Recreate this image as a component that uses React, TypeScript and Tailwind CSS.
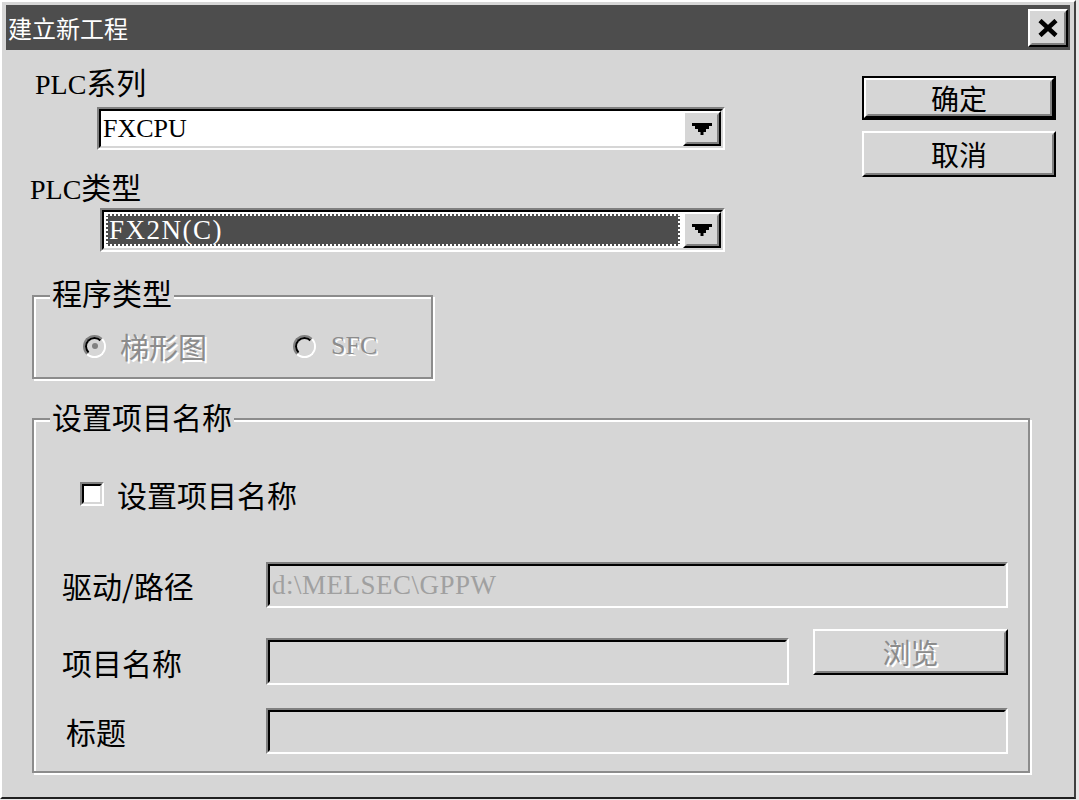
import React from "react";

function Arrow() {
  return (
    <svg width="20" height="12" viewBox="0 0 20 12">
      <path d="M0 0 H20 V3 H17 V6 H14 V9 H11.5 V12 H8.5 V9 H6 V6 H3 V3 H0 Z" fill="#000" />
    </svg>
  );
}

function ArrowButton() {
  return (
    <div className="w-[38px] h-full border-2 border-t-white border-l-white border-r-black border-b-black bg-[#d6d6d6]">
      <div className="w-full h-full border-2 border-t-[#d6d6d6] border-l-[#d6d6d6] border-r-[#808080] border-b-[#808080] flex items-center justify-center">
        <Arrow />
      </div>
    </div>
  );
}

function DisabledText({ children }: { children: React.ReactNode }) {
  return <span className="text-[#8c8c8c] [text-shadow:2px_2px_0_#ffffff]">{children}</span>;
}

export default function App() {
  return (
    <div className="w-[1079px] h-[800px] bg-[#e8e8e8] font-['Noto_Sans_CJK_SC',sans-serif] text-black">
      <div className="w-[1076px] h-[799px] bg-[#d6d6d6] border-2 border-t-white border-l-white border-r-[#404040] border-b-[#202020] flex flex-col">
        {/* Title bar */}
        <div className="mx-[4px] mt-[3px] h-[45px] bg-[#4d4d4d] flex items-center justify-between pl-[2px] pr-[2px]">
          <span className="text-white text-[24px] leading-none">建立新工程</span>
          <div className="w-[40px] h-[38px] bg-[#d6d6d6] border-2 border-t-white border-l-white border-r-black border-b-black">
            <div className="w-full h-full border-2 border-t-[#d6d6d6] border-l-[#d6d6d6] border-r-[#808080] border-b-[#808080] flex items-center justify-center">
              <svg width="22" height="18" viewBox="0 0 22 18">
                <path d="M3 1.5 L19 16.5 M19 1.5 L3 16.5" stroke="#000" strokeWidth="4.5" />
              </svg>
            </div>
          </div>
        </div>

        {/* Top section */}
        <div className="flex">
          <div className="w-[723px] flex flex-col">
            <div className="mt-[15px] ml-[33px] h-[32px] leading-[32px] text-[30px]">
              <span className="font-['Liberation_Serif',serif] text-[28px]">PLC</span>
              <span>系列</span>
            </div>
            {/* Combo 1 */}
            <div className="mt-[10px] ml-[95px] w-[628px] h-[43px] border-2 border-t-[#808080] border-l-[#808080] border-r-white border-b-white">
              <div className="w-full h-full border-2 border-t-black border-l-black border-r-[#d6d6d6] border-b-[#d6d6d6] bg-white flex items-center justify-between">
                <span className="pl-[2px] font-['Liberation_Serif',serif] text-[26px] leading-none">FXCPU</span>
                <ArrowButton />
              </div>
            </div>
            <div className="mt-[20px] ml-[28px] h-[32px] leading-[32px] text-[30px]">
              <span className="font-['Liberation_Serif',serif] text-[28px]">PLC</span>
              <span>类型</span>
            </div>
            {/* Combo 2 */}
            <div className="mt-[6px] ml-[98px] w-[625px] h-[44px] border-2 border-t-[#808080] border-l-[#808080] border-r-white border-b-white">
              <div className="w-full h-full border-2 border-t-black border-l-black border-r-[#d6d6d6] border-b-[#d6d6d6] bg-white flex items-stretch">
                <div className="flex-1 m-[2px] mr-[3px] bg-[#4d4d4d] border-2 border-dotted border-white flex items-center">
                  <span className="pl-[1px] font-['Liberation_Serif',serif] text-[27px] tracking-[1.5px] leading-none text-white">FX2N(C)</span>
                </div>
                <ArrowButton />
              </div>
            </div>
            {/* Group 1 */}
            <div className="relative mt-[43px] ml-[30px] w-[401px] h-[84px] border-2 border-[#8c8c8c] shadow-[inset_2px_2px_0_#ffffff,2px_2px_0_#ffffff]">
              <div className="absolute left-[16px] top-[-21px] px-[2px] bg-[#d6d6d6] text-[30px] leading-[32px]">程序类型</div>
              <div className="mt-[37px] ml-[49px] h-[24px] flex items-center">
                <div className="w-[23px] h-[23px] rounded-full border-2 border-t-[#808080] border-l-[#808080] border-r-white border-b-white">
                  <div className="w-full h-full rounded-full border-2 border-t-black border-l-black border-r-[#d6d6d6] border-b-[#d6d6d6] flex items-center justify-center">
                    <div className="w-[6px] h-[6px] rounded-full bg-[#808080]" />
                  </div>
                </div>
                <span className="ml-[14px] text-[29px] leading-none">
                  <DisabledText>梯形图</DisabledText>
                </span>
                <div className="ml-[86px] w-[23px] h-[23px] rounded-full border-2 border-t-[#808080] border-l-[#808080] border-r-white border-b-white">
                  <div className="w-full h-full rounded-full border-2 border-t-black border-l-black border-r-[#d6d6d6] border-b-[#d6d6d6]" />
                </div>
                <span className="ml-[15px] font-['Liberation_Serif',serif] text-[26px] leading-none">
                  <DisabledText>SFC</DisabledText>
                </span>
              </div>
            </div>
          </div>

          {/* Buttons */}
          <div className="ml-[137px] mt-[26px] flex flex-col gap-[11px]">
            <div className="w-[194px] h-[44px] border-2 border-black">
              <div className="w-full h-full border-2 border-t-white border-l-white border-r-black border-b-black">
                <div className="w-full h-full border-2 border-t-[#d6d6d6] border-l-[#d6d6d6] border-r-[#808080] border-b-[#808080] flex items-center justify-center text-[28px] leading-none">
                  确定
                </div>
              </div>
            </div>
            <div className="w-[194px] h-[46px] border-2 border-t-white border-l-white border-r-black border-b-black">
              <div className="w-full h-full border-2 border-t-[#d6d6d6] border-l-[#d6d6d6] border-r-[#808080] border-b-[#808080] flex items-center justify-center text-[28px] leading-none">
                取消
              </div>
            </div>
          </div>
        </div>

        {/* Group 2 */}
        <div className="relative mt-[39px] ml-[30px] w-[998px] h-[355px] border-2 border-[#8c8c8c] shadow-[inset_2px_2px_0_#ffffff,2px_2px_0_#ffffff] flex flex-col">
          <div className="absolute left-[16px] top-[-20px] px-[2px] bg-[#d6d6d6] text-[30px] leading-[32px]">设置项目名称</div>

          <div className="mt-[58px] ml-[46px] h-[32px] flex items-center">
            <div className="w-[24px] h-[24px] border-2 border-t-[#808080] border-l-[#808080] border-r-white border-b-white">
              <div className="w-full h-full border-2 border-t-black border-l-black border-r-[#d6d6d6] border-b-[#d6d6d6] bg-white" />
            </div>
            <span className="ml-[13px] text-[30px] leading-[32px]">设置项目名称</span>
          </div>

          {/* Row 1 */}
          <div className="mt-[52px] ml-[28px] h-[46px] flex items-center">
            <span className="w-[204px] text-[30px] leading-[32px]">驱动/路径</span>
            <div className="w-[742px] h-[46px] border-2 border-t-[#808080] border-l-[#808080] border-r-white border-b-white">
              <div className="w-full h-full border-2 border-t-black border-l-black border-r-[#d6d6d6] border-b-[#d6d6d6] flex items-center">
                <span className="pl-[2px] font-['Liberation_Serif',serif] text-[27px] tracking-[0.5px] leading-none text-[#a0a0a0]">d:\MELSEC\GPPW</span>
              </div>
            </div>
          </div>

          {/* Row 2 */}
          <div className="mt-[21px] ml-[28px] h-[56px] flex items-start">
            <span className="mt-[17px] w-[204px] text-[30px] leading-[32px]">项目名称</span>
            <div className="mt-[9px] w-[523px] h-[47px] border-2 border-t-[#808080] border-l-[#808080] border-r-white border-b-white">
              <div className="w-full h-full border-2 border-t-black border-l-black border-r-[#d6d6d6] border-b-[#d6d6d6]" />
            </div>
            <div className="ml-[24px] w-[195px] h-[46px] border-2 border-t-white border-l-white border-r-black border-b-black">
              <div className="w-full h-full border-2 border-t-[#d6d6d6] border-l-[#d6d6d6] border-r-[#808080] border-b-[#808080] flex items-center justify-center text-[28px] leading-none">
                <DisabledText>浏览</DisabledText>
              </div>
            </div>
          </div>

          {/* Row 3 */}
          <div className="mt-[23px] ml-[28px] h-[46px] flex items-center">
            <span className="w-[204px] pl-[4px] text-[30px] leading-[32px]">标题</span>
            <div className="w-[742px] h-[46px] border-2 border-t-[#808080] border-l-[#808080] border-r-white border-b-white">
              <div className="w-full h-full border-2 border-t-black border-l-black border-r-[#d6d6d6] border-b-[#d6d6d6]" />
            </div>
          </div>
        </div>
      </div>
    </div>
  );
}
